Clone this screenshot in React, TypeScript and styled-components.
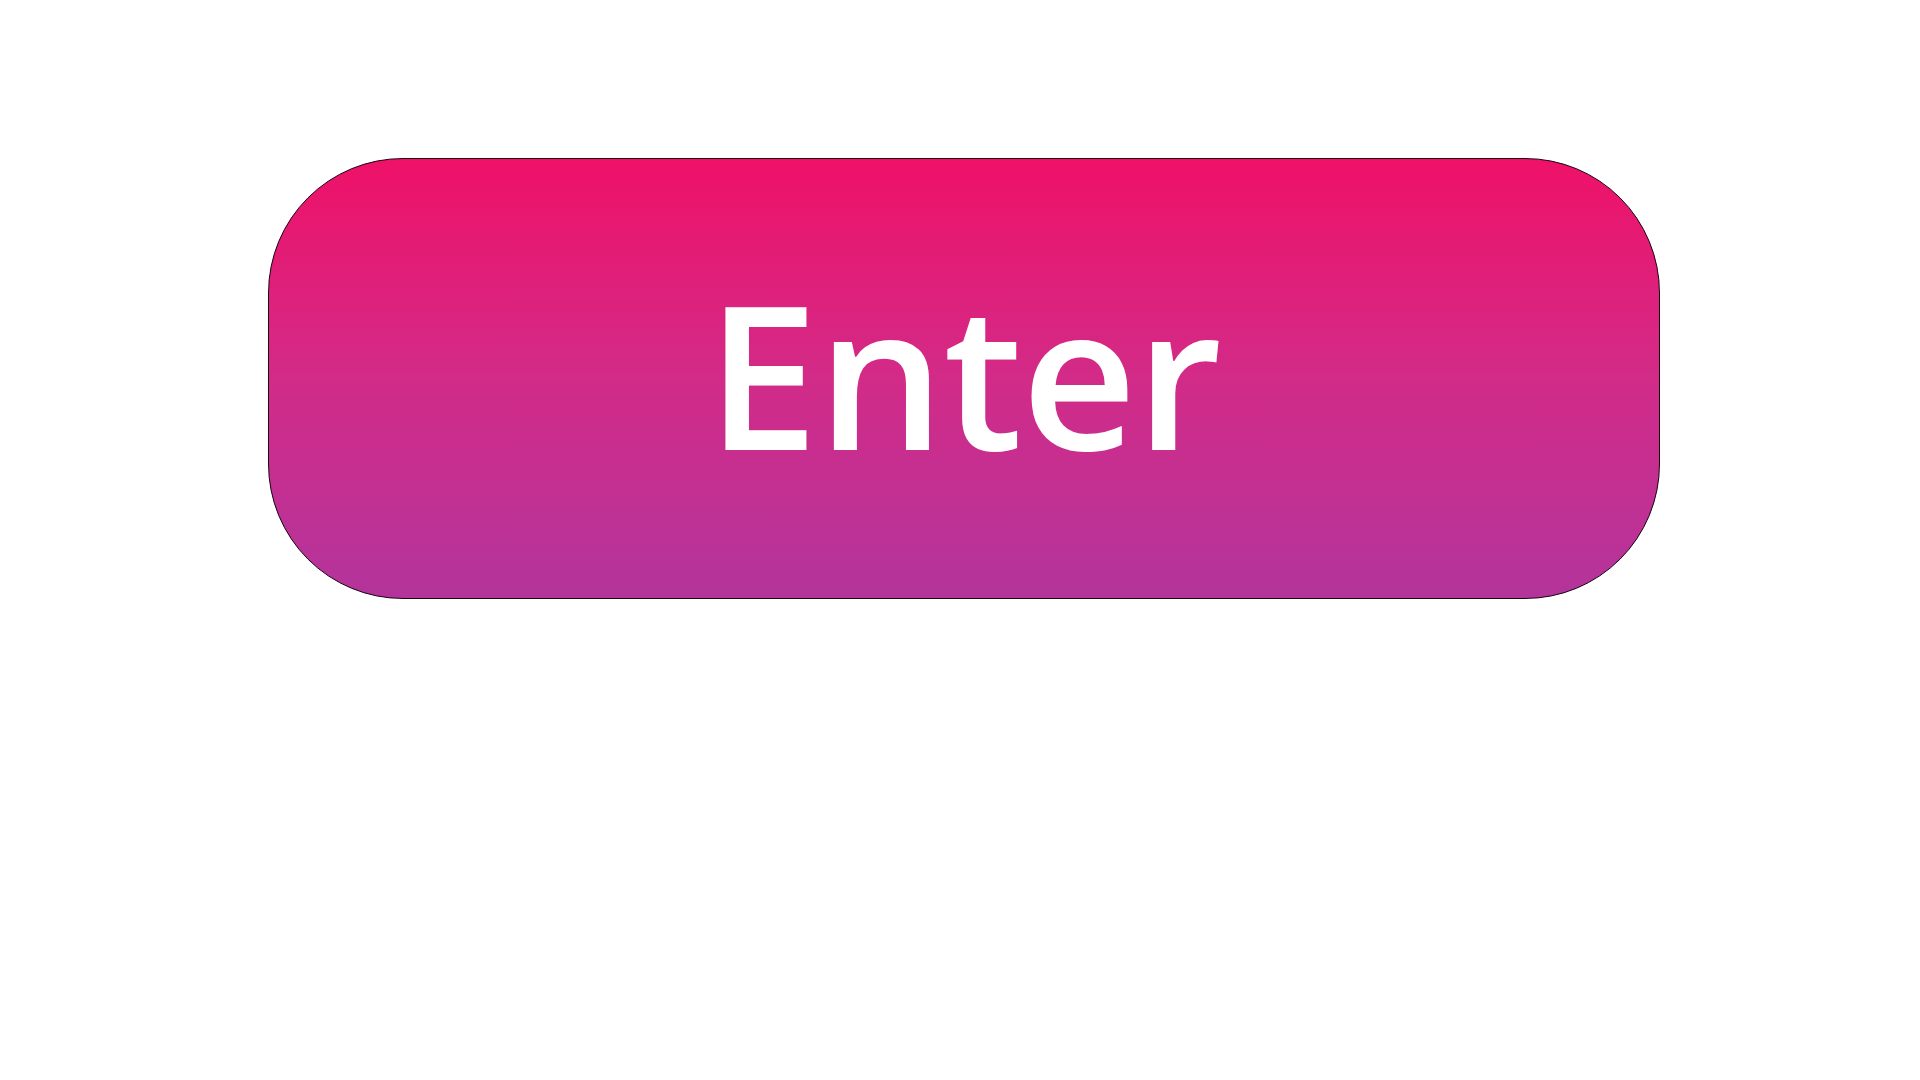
import React from "react";
import styled, { createGlobalStyle } from "styled-components";

const GlobalStyle = createGlobalStyle`
  html, body {
    margin: 0;
    padding: 0;
    background: #ffffff;
  }
`;

const Page = styled.main`
  width: 1920px;
  height: 1080px;
  box-sizing: border-box;
  padding: 158px 260px 0 268px;
  display: flex;
  flex-direction: column;
  align-items: stretch;
`;

const EnterButton = styled.button`
  box-sizing: border-box;
  width: 1392px;
  height: 441px;
  border: 1px solid #1a0010;
  border-radius: 135px;
  background: linear-gradient(180deg, #ef1168 0%, #d22b88 50%, #b3349b 100%);
  color: #ffffff;
  font-family: "Open Sans", "Noto Sans", sans-serif;
  font-weight: 650;
  font-size: 200px;
  letter-spacing: -1px;
  line-height: 1;
  display: flex;
  align-items: center;
  justify-content: center;
  padding: 0;
  cursor: pointer;
`;

const Label = styled.span`
  display: block;
  transform: translateY(-6px);
`;

export default function App() {
  return (
    <>
      <GlobalStyle />
      <Page>
        <EnterButton type="button">
          <Label>Enter</Label>
        </EnterButton>
      </Page>
    </>
  );
}
